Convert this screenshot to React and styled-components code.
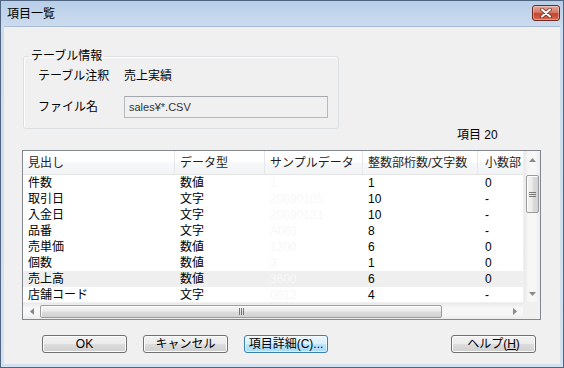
import React from "react";
import { styled, createGlobalStyle } from "styled-components";

const GlobalStyle = createGlobalStyle`
    html, body {
        margin: 0;
        padding: 0;
        background: #fff;
    }
    body {
        font-family: "Liberation Sans", "Noto Sans CJK JP", sans-serif;
        font-size: 12px;
        color: #000;
    }
`;

const columns = [
    { title: "見出し", width: 152 },
    { title: "データ型", width: 90 },
    { title: "サンプルデータ", width: 98 },
    { title: "整数部桁数/文字数", width: 115 },
    { title: "小数部", width: 44, pad: 7 },
];

const rows = [
    ["件数", "数値", "1", "1", "0"],
    ["取引日", "文字", "20090105", "10", "-"],
    ["入金日", "文字", "20090131", "10", "-"],
    ["品番", "文字", "A001", "8", "-"],
    ["売単価", "数値", "1200", "6", "0"],
    ["個数", "数値", "3", "1", "0"],
    ["売上高", "数値", "3600", "6", "0"],
    ["店舗コード", "文字", "0012", "4", "-"],
];

const Arrow = ({ dir }) => {
    const pts = {
        up: "0,4 3.5,0 7,4",
        down: "0,0 3.5,4 7,0",
        left: "4,0 0,3.5 4,7",
        right: "0,0 4,3.5 0,7",
    }[dir];
    const vertical = dir === "up" || dir === "down";
    return (
        <svg width={vertical ? 7 : 4} height={vertical ? 4 : 7} viewBox={vertical ? "0 0 7 4" : "0 0 4 7"}>
            <polygon points={pts} fill="#8a8a8a" />
        </svg>
    );
};

const App = () => {
    return (
        <>
            <GlobalStyle />
            <Window>
                <TitleBar>
                    <Title>項目一覧</Title>
                    <CloseButton>
                        <svg width="12" height="10" viewBox="0 0 12 10">
                            <path d="M2 1.5 L10 8.5 M10 1.5 L2 8.5" stroke="#6b2418" strokeWidth="3.6" strokeLinecap="round" />
                            <path d="M2 1.5 L10 8.5 M10 1.5 L2 8.5" stroke="#fff" strokeWidth="2.2" strokeLinecap="round" />
                        </svg>
                    </CloseButton>
                </TitleBar>
                <Body>
                    <GroupBox>
                        <Legend>テーブル情報</Legend>
                        <FieldRow>
                            <FieldLabel>テーブル注釈</FieldLabel>
                            <FieldValue>売上実績</FieldValue>
                        </FieldRow>
                        <FieldRow $gap>
                            <FieldLabel>ファイル名</FieldLabel>
                            <ReadOnlyBox>sales¥*.CSV</ReadOnlyBox>
                        </FieldRow>
                    </GroupBox>

                    <CountLabel>項目 20</CountLabel>

                    <ListView>
                        <Viewport>
                            <HeaderRow>
                                {columns.map((c) => (
                                    <HeaderCell key={c.title} $w={c.width} $pad={c.pad}>
                                        {c.title}
                                    </HeaderCell>
                                ))}
                            </HeaderRow>
                            {rows.map((r, i) => (
                                <DataRow key={r[0]} $hot={i === 6}>
                                    {r.map((v, j) => (
                                        <Cell key={j} $w={columns[j].width} $pad={columns[j].pad} $faint={j === 2}>
                                            {v}
                                        </Cell>
                                    ))}
                                </DataRow>
                            ))}
                        </Viewport>
                        <VScroll>
                            <ArrowBox>
                                <Arrow dir="up" />
                            </ArrowBox>
                            <VTrack>
                                <VThumb>
                                    <GripV />
                                </VThumb>
                            </VTrack>
                            <ArrowBox>
                                <Arrow dir="down" />
                            </ArrowBox>
                        </VScroll>
                        <HScroll>
                            <ArrowBox>
                                <Arrow dir="left" />
                            </ArrowBox>
                            <HTrack>
                                <HThumb>
                                    <GripH />
                                </HThumb>
                            </HTrack>
                            <ArrowBox>
                                <Arrow dir="right" />
                            </ArrowBox>
                        </HScroll>
                        <Corner />
                    </ListView>

                    <ButtonBar>
                        <PushButton>OK</PushButton>
                        <PushButton>キャンセル</PushButton>
                        <PushButton $primary>項目詳細(C)...</PushButton>
                        <PushButton $push>
                            ヘルプ(<u>H</u>)
                        </PushButton>
                    </ButtonBar>
                </Body>
            </Window>
        </>
    );
};

const Window = styled.div`
    width: 564px;
    height: 368px;
    box-sizing: border-box;
    border: 1px solid #4f6580;
    background: linear-gradient(to bottom, #b8cee8 0px, #cddcee 26px, #d3e1f1 100%);
    display: flex;
    flex-direction: column;
`;

const TitleBar = styled.div`
    height: 25px;
    flex: none;
    display: flex;
    align-items: center;
    justify-content: space-between;
    padding: 0 3px 0 6px;
`;

const Title = styled.div`
    font-size: 12px;
    line-height: 14px;
    color: #000;
`;

const CloseButton = styled.div`
    width: 28px;
    height: 16px;
    box-sizing: border-box;
    margin-top: -1px;
    border: 1px solid #6e2a22;
    border-radius: 3px;
    background: linear-gradient(to bottom, #e7a798 0%, #d57a66 45%, #c4452f 55%, #d5694f 100%);
    box-shadow: inset 0 0 0 1px rgba(255, 255, 255, 0.35);
    display: flex;
    align-items: center;
    justify-content: center;
`;

const Body = styled.div`
    flex: 1;
    margin: 0 3px 3px 3px;
    background: #f0f0f0;
    border-top: 1px solid #a9bbd0;
    padding: 0 19px 0 18px;
    display: flex;
    flex-direction: column;
`;

const GroupBox = styled.fieldset`
    width: 316px;
    box-sizing: border-box;
    margin: 22px 0 0 1px;
    border: 1px solid #dcdfe2;
    border-radius: 3px;
    padding: 5px 10px 10px 14px;
    box-shadow: inset 1px 1px 0 #fff;
    min-inline-size: 0;
`;

const Legend = styled.legend`
    font-size: 12px;
    line-height: 14px;
    padding: 0 2px;
    margin-left: -9px;
    color: #000;
`;

const FieldRow = styled.div`
    display: flex;
    align-items: center;
    height: ${(p) => (p.$gap ? 22 : 16)}px;
    margin-top: ${(p) => (p.$gap ? 12 : 0)}px;
`;

const FieldLabel = styled.div`
    width: 86px;
    flex: none;
    line-height: 14px;
`;

const FieldValue = styled.div`
    line-height: 14px;
`;

const ReadOnlyBox = styled.div`
    width: 204px;
    height: 22px;
    box-sizing: border-box;
    border: 1px solid #b5b8bd;
    border-top-color: #a4a8ae;
    background: #f0f0f0;
    padding: 0 4px;
    display: flex;
    align-items: center;
    font-size: 11px;
    color: #333;
`;

const CountLabel = styled.div`
    height: 12px;
    line-height: 12px;
    padding-left: 435px;
`;

const ListView = styled.div`
    margin-top: 9px;
    width: 519px;
    height: 170px;
    box-sizing: border-box;
    border: 1px solid #828790;
    background: #fff;
    display: grid;
    grid-template-columns: 1fr 17px;
    grid-template-rows: 1fr 17px;
    overflow: hidden;
`;

const Viewport = styled.div`
    overflow: hidden;
    min-width: 0;
    min-height: 0;
`;

const HeaderRow = styled.div`
    display: flex;
    height: 24px;
    box-sizing: border-box;
    border-bottom: 1px solid #e5e5e5;
    background: linear-gradient(to bottom, #ffffff 0%, #ffffff 45%, #f6f7f8 55%, #f3f4f6 100%);
`;

const HeaderCell = styled.div`
    width: ${(p) => p.$w}px;
    flex: none;
    box-sizing: border-box;
    border-right: 1px solid #e3e6ea;
    padding: 5px 0 0 ${(p) => p.$pad || 5}px;
    line-height: 14px;
    white-space: nowrap;
    overflow: hidden;
    color: #1e1e1e;
    &:last-child {
        border-right: none;
    }
`;

const DataRow = styled.div`
    display: flex;
    height: 16px;
    background: ${(p) => (p.$hot ? "#efefef" : "transparent")};
`;

const Cell = styled.div`
    width: ${(p) => p.$w}px;
    flex: none;
    box-sizing: border-box;
    padding-left: ${(p) => p.$pad || 5}px;
    line-height: 16px;
    white-space: nowrap;
    overflow: hidden;
    color: ${(p) => (p.$faint ? "#f7f7f7" : "#000")};
`;

const VScroll = styled.div`
    display: flex;
    flex-direction: column;
    background: linear-gradient(to right, #e9e9e9, #f7f7f7 30%, #f7f7f7 70%, #ececec);
    border-left: 1px solid #f0f0f0;
`;

const HScroll = styled.div`
    display: flex;
    background: linear-gradient(to bottom, #e9e9e9, #f7f7f7 30%, #f7f7f7 70%, #ececec);
    border-top: 1px solid #f0f0f0;
`;

const ArrowBox = styled.div`
    width: 17px;
    height: 17px;
    flex: none;
    display: flex;
    align-items: center;
    justify-content: center;
`;

const VTrack = styled.div`
    flex: 1;
    display: flex;
    flex-direction: column;
    align-items: center;
`;

const HTrack = styled.div`
    flex: 1;
    display: flex;
    align-items: center;
`;

const VThumb = styled.div`
    margin-top: 7px;
    width: 13px;
    height: 38px;
    box-sizing: border-box;
    border: 1px solid #9b9b9b;
    border-radius: 2px;
    background: linear-gradient(to right, #f4f4f4 0%, #ececec 45%, #dcdcdc 55%, #d2d2d2 100%);
    box-shadow: inset 1px 1px 0 #fff;
    display: flex;
    align-items: center;
    justify-content: center;
`;

const HThumb = styled.div`
    width: 402px;
    height: 13px;
    box-sizing: border-box;
    border: 1px solid #9b9b9b;
    border-radius: 2px;
    background: linear-gradient(to bottom, #f4f4f4 0%, #ececec 45%, #dcdcdc 55%, #d2d2d2 100%);
    box-shadow: inset 1px 1px 0 #fff;
    display: flex;
    align-items: center;
    justify-content: center;
`;

const GripV = styled.div`
    width: 7px;
    height: 5px;
    border-top: 1px solid #777;
    border-bottom: 1px solid #777;
    background: linear-gradient(to bottom, transparent 40%, #777 40%, #777 60%, transparent 60%);
    box-sizing: border-box;
`;

const GripH = styled.div`
    width: 5px;
    height: 7px;
    border-left: 1px solid #777;
    border-right: 1px solid #777;
    background: linear-gradient(to right, transparent 40%, #777 40%, #777 60%, transparent 60%);
    box-sizing: border-box;
`;

const Corner = styled.div`
    background: #f0f0f0;
`;

const ButtonBar = styled.div`
    display: flex;
    gap: 16px;
    margin-top: 15px;
    padding: 0 5px 0 20px;
`;

const PushButton = styled.div`
    width: ${(p) => (p.$primary ? 84 : 85)}px;
    height: 18px;
    box-sizing: border-box;
    margin-left: ${(p) => (p.$push ? "auto" : "0")};
    border: 1px solid ${(p) => (p.$primary ? "#3c7fb1" : "#707070")};
    border-radius: 3px;
    background: ${(p) =>
        p.$primary
            ? "linear-gradient(to bottom, #eaf6fd 0%, #d9f0fc 50%, #bee6fd 50%, #a7d9f5 100%)"
            : "linear-gradient(to bottom, #f2f2f2 0%, #ebebeb 50%, #dddddd 50%, #cfcfcf 100%)"};
    box-shadow: inset 0 0 0 1px ${(p) => (p.$primary ? "rgba(255,255,255,0.6)" : "#fcfcfc")};
    display: flex;
    align-items: center;
    justify-content: center;
    font-size: 12px;
    line-height: 14px;
    color: #000;
`;

export default App;
